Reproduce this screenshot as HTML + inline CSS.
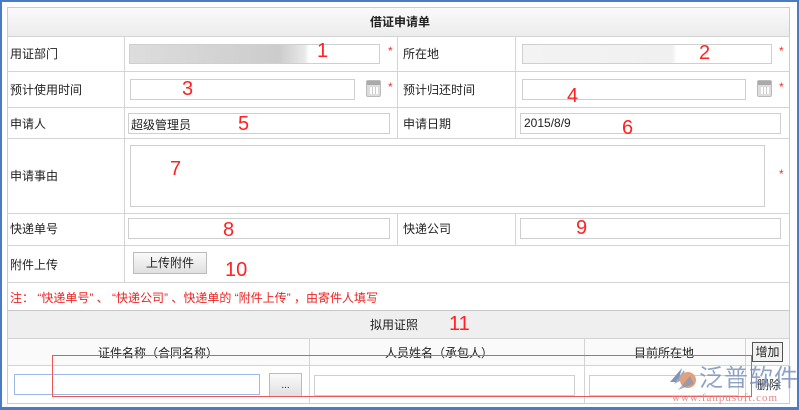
<!DOCTYPE html>
<html><head><meta charset="utf-8"><style>
*{margin:0;padding:0;box-sizing:border-box}
html,body{width:799px;height:410px;overflow:hidden}
body{background:#fff;position:relative;font-family:"Liberation Sans","Noto Sans CJK SC",sans-serif;font-size:12px;color:#222}
.a{position:absolute}
.frame{left:0;top:0;width:799px;height:410px;border:2px solid #4a7cc4;border-bottom-width:3px}
.tbl{left:7px;top:7px;width:783px;height:397px;border:1px solid #ccc}
.hl{position:absolute;height:1px;background:#d4d4d4}
.vl{position:absolute;width:1px;background:#d4d4d4}
.lbl{position:absolute;font-size:12px;color:#222;white-space:nowrap}
.in{position:absolute;border:1px solid #cfcfcf;background:#fff}
.star{position:absolute;color:#e33;font-size:12px}
.num{position:absolute;color:#f22;font-size:20px;font-family:"Liberation Sans",sans-serif}
.cal{position:absolute;width:15px;height:17px;background:#ddd;border:1px solid #bbb;border-radius:2px}
.cal:before{content:"";position:absolute;left:0;top:0;right:0;height:4px;background:#aaa}
.cal:after{content:"";position:absolute;left:3px;top:6px;width:8px;height:7px;background:repeating-linear-gradient(90deg,#fff 0 2px,#ccc 2px 3px)}
.btn{position:absolute;border:1px solid #bbb;background:linear-gradient(#fafafa,#e0e0e0);font-size:12px;text-align:center;white-space:nowrap}
</style></head><body>
<div class="a frame"></div>
<div class="a" style="left:8px;top:8px;width:781px;height:28px;background:linear-gradient(#fafafa,#ececec)"></div>
<div class="a" style="left:8px;top:311px;width:781px;height:27px;background:#efefef"></div>
<div class="a" style="left:8px;top:339px;width:781px;height:26px;background:#fafafa"></div>
<div class="a tbl"></div>
<div class="hl" style="left:7px;top:36px;width:783px"></div>
<div class="hl" style="left:7px;top:71px;width:783px"></div>
<div class="hl" style="left:7px;top:107px;width:783px"></div>
<div class="hl" style="left:7px;top:138px;width:783px"></div>
<div class="hl" style="left:7px;top:213px;width:783px"></div>
<div class="hl" style="left:7px;top:245px;width:783px"></div>
<div class="hl" style="left:7px;top:282px;width:783px"></div>
<div class="hl" style="left:7px;top:310px;width:783px;background:#c8c8c8"></div>
<div class="hl" style="left:7px;top:338px;width:783px"></div>
<div class="hl" style="left:7px;top:365px;width:783px"></div>
<div class="vl" style="left:124px;top:36px;height:246px"></div>
<div class="vl" style="left:397px;top:36px;height:102px"></div>
<div class="vl" style="left:515px;top:36px;height:102px"></div>
<div class="vl" style="left:397px;top:213px;height:32px"></div>
<div class="vl" style="left:515px;top:213px;height:32px"></div>
<div class="vl" style="left:309px;top:338px;height:66px"></div>
<div class="vl" style="left:584px;top:338px;height:66px"></div>
<div class="vl" style="left:745px;top:338px;height:66px"></div>

<div class="lbl" style="left:370px;top:13px;font-weight:bold">借证申请单</div>
<div class="lbl" style="left:10px;top:45px">用证部门</div>
<div class="lbl" style="left:403px;top:45px">所在地</div>
<div class="lbl" style="left:10px;top:81px">预计使用时间</div>
<div class="lbl" style="left:403px;top:81px">预计归还时间</div>
<div class="lbl" style="left:10px;top:115px">申请人</div>
<div class="lbl" style="left:403px;top:115px">申请日期</div>
<div class="lbl" style="left:10px;top:167px">申请事由</div>
<div class="lbl" style="left:10px;top:220px">快递单号</div>
<div class="lbl" style="left:403px;top:220px">快递公司</div>
<div class="lbl" style="left:10px;top:256px">附件上传</div>
<div class="lbl" style="left:10px;top:289px;color:#e22">注： “快递单号” 、 “快递公司” 、快递单的 “附件上传” ，由寄件人填写</div>
<div class="lbl" style="left:370px;top:316px">拟用证照</div>
<div class="lbl" style="left:98px;top:344px">证件名称（合同名称）</div>
<div class="lbl" style="left:385px;top:344px">人员姓名（承包人）</div>
<div class="lbl" style="left:634px;top:344px">目前所在地</div>

<div class="in" style="left:129px;top:44px;width:251px;height:20px;background:linear-gradient(90deg,#ddd,#ccc 60%,#e8e8e8 70%,#fff 72%)"></div>
<div class="in" style="left:522px;top:44px;width:250px;height:20px;background:linear-gradient(90deg,#f3f3f3,#f0f0f0 60%,#fff 62%)"></div>
<div class="in" style="left:130px;top:79px;width:225px;height:21px"></div>
<div class="in" style="left:522px;top:79px;width:224px;height:21px"></div>
<div class="cal" style="left:366px;top:80px"></div>
<div class="cal" style="left:757px;top:80px"></div>
<div class="star" style="left:388px;top:44px">*</div>
<div class="star" style="left:779px;top:44px">*</div>
<div class="star" style="left:388px;top:80px">*</div>
<div class="star" style="left:779px;top:80px">*</div>
<div class="star" style="left:779px;top:167px">*</div>
<div class="in" style="left:128px;top:113px;width:262px;height:21px;padding:2px 2px;font-size:12px">超级管理员</div>
<div class="in" style="left:520px;top:113px;width:261px;height:21px;padding:2px 3px;font-size:12px">2015/8/9</div>
<div class="in" style="left:130px;top:145px;width:635px;height:62px"></div>
<div class="in" style="left:128px;top:218px;width:262px;height:21px"></div>
<div class="in" style="left:520px;top:218px;width:261px;height:21px"></div>
<div class="btn" style="left:133px;top:252px;width:74px;height:22px;line-height:20px">上传附件</div>

<div class="in" style="left:14px;top:374px;width:246px;height:21px;border-color:#9bb8e8"></div>
<div class="btn" style="left:269px;top:373px;width:33px;height:24px;line-height:24px;font-size:10px">...</div>
<div class="in" style="left:314px;top:375px;width:261px;height:21px"></div>
<div class="in" style="left:589px;top:375px;width:150px;height:21px"></div>
<div class="btn" style="left:752px;top:342px;width:31px;height:20px;line-height:18px;border:1px solid #555;background:#f2f2f2">增加</div>
<div class="lbl" style="left:757px;top:376px;color:#333">删除</div>

<div class="a" style="left:52px;top:355px;width:700px;height:42px;border:1px solid #e55"></div>

<div class="num" style="left:317px;top:40px">1</div>
<div class="num" style="left:699px;top:42px">2</div>
<div class="num" style="left:182px;top:78px">3</div>
<div class="num" style="left:567px;top:85px">4</div>
<div class="num" style="left:238px;top:113px">5</div>
<div class="num" style="left:622px;top:117px">6</div>
<div class="num" style="left:170px;top:158px">7</div>
<div class="num" style="left:223px;top:219px">8</div>
<div class="num" style="left:576px;top:217px">9</div>
<div class="num" style="left:225px;top:259px">10</div>
<div class="num" style="left:449px;top:313px">11</div>

<svg class="a" style="left:668px;top:366px" width="30" height="28" viewBox="0 0 30 28"><path d="M14 2 L2 16 L10 16 Z" fill="#7f95b8"/><path d="M6 18 L16 4 L18 12 Z" fill="#9aabc7"/><circle cx="20" cy="14" r="8" fill="#e3a07c"/><path d="M10 24 L22 10 L26 18 Z" fill="#7f95b8" opacity=".7"/></svg>
<div class="lbl" style="left:699px;top:365px;font-size:24px;line-height:28px;color:#7c93bb;opacity:.85;letter-spacing:1px">泛普软件</div>
<div class="lbl" style="left:672px;top:392px;font-size:11px;line-height:12px;color:#d88;font-family:'Liberation Serif',serif;letter-spacing:1px">www.fanpusoft.com</div>
</body></html>
